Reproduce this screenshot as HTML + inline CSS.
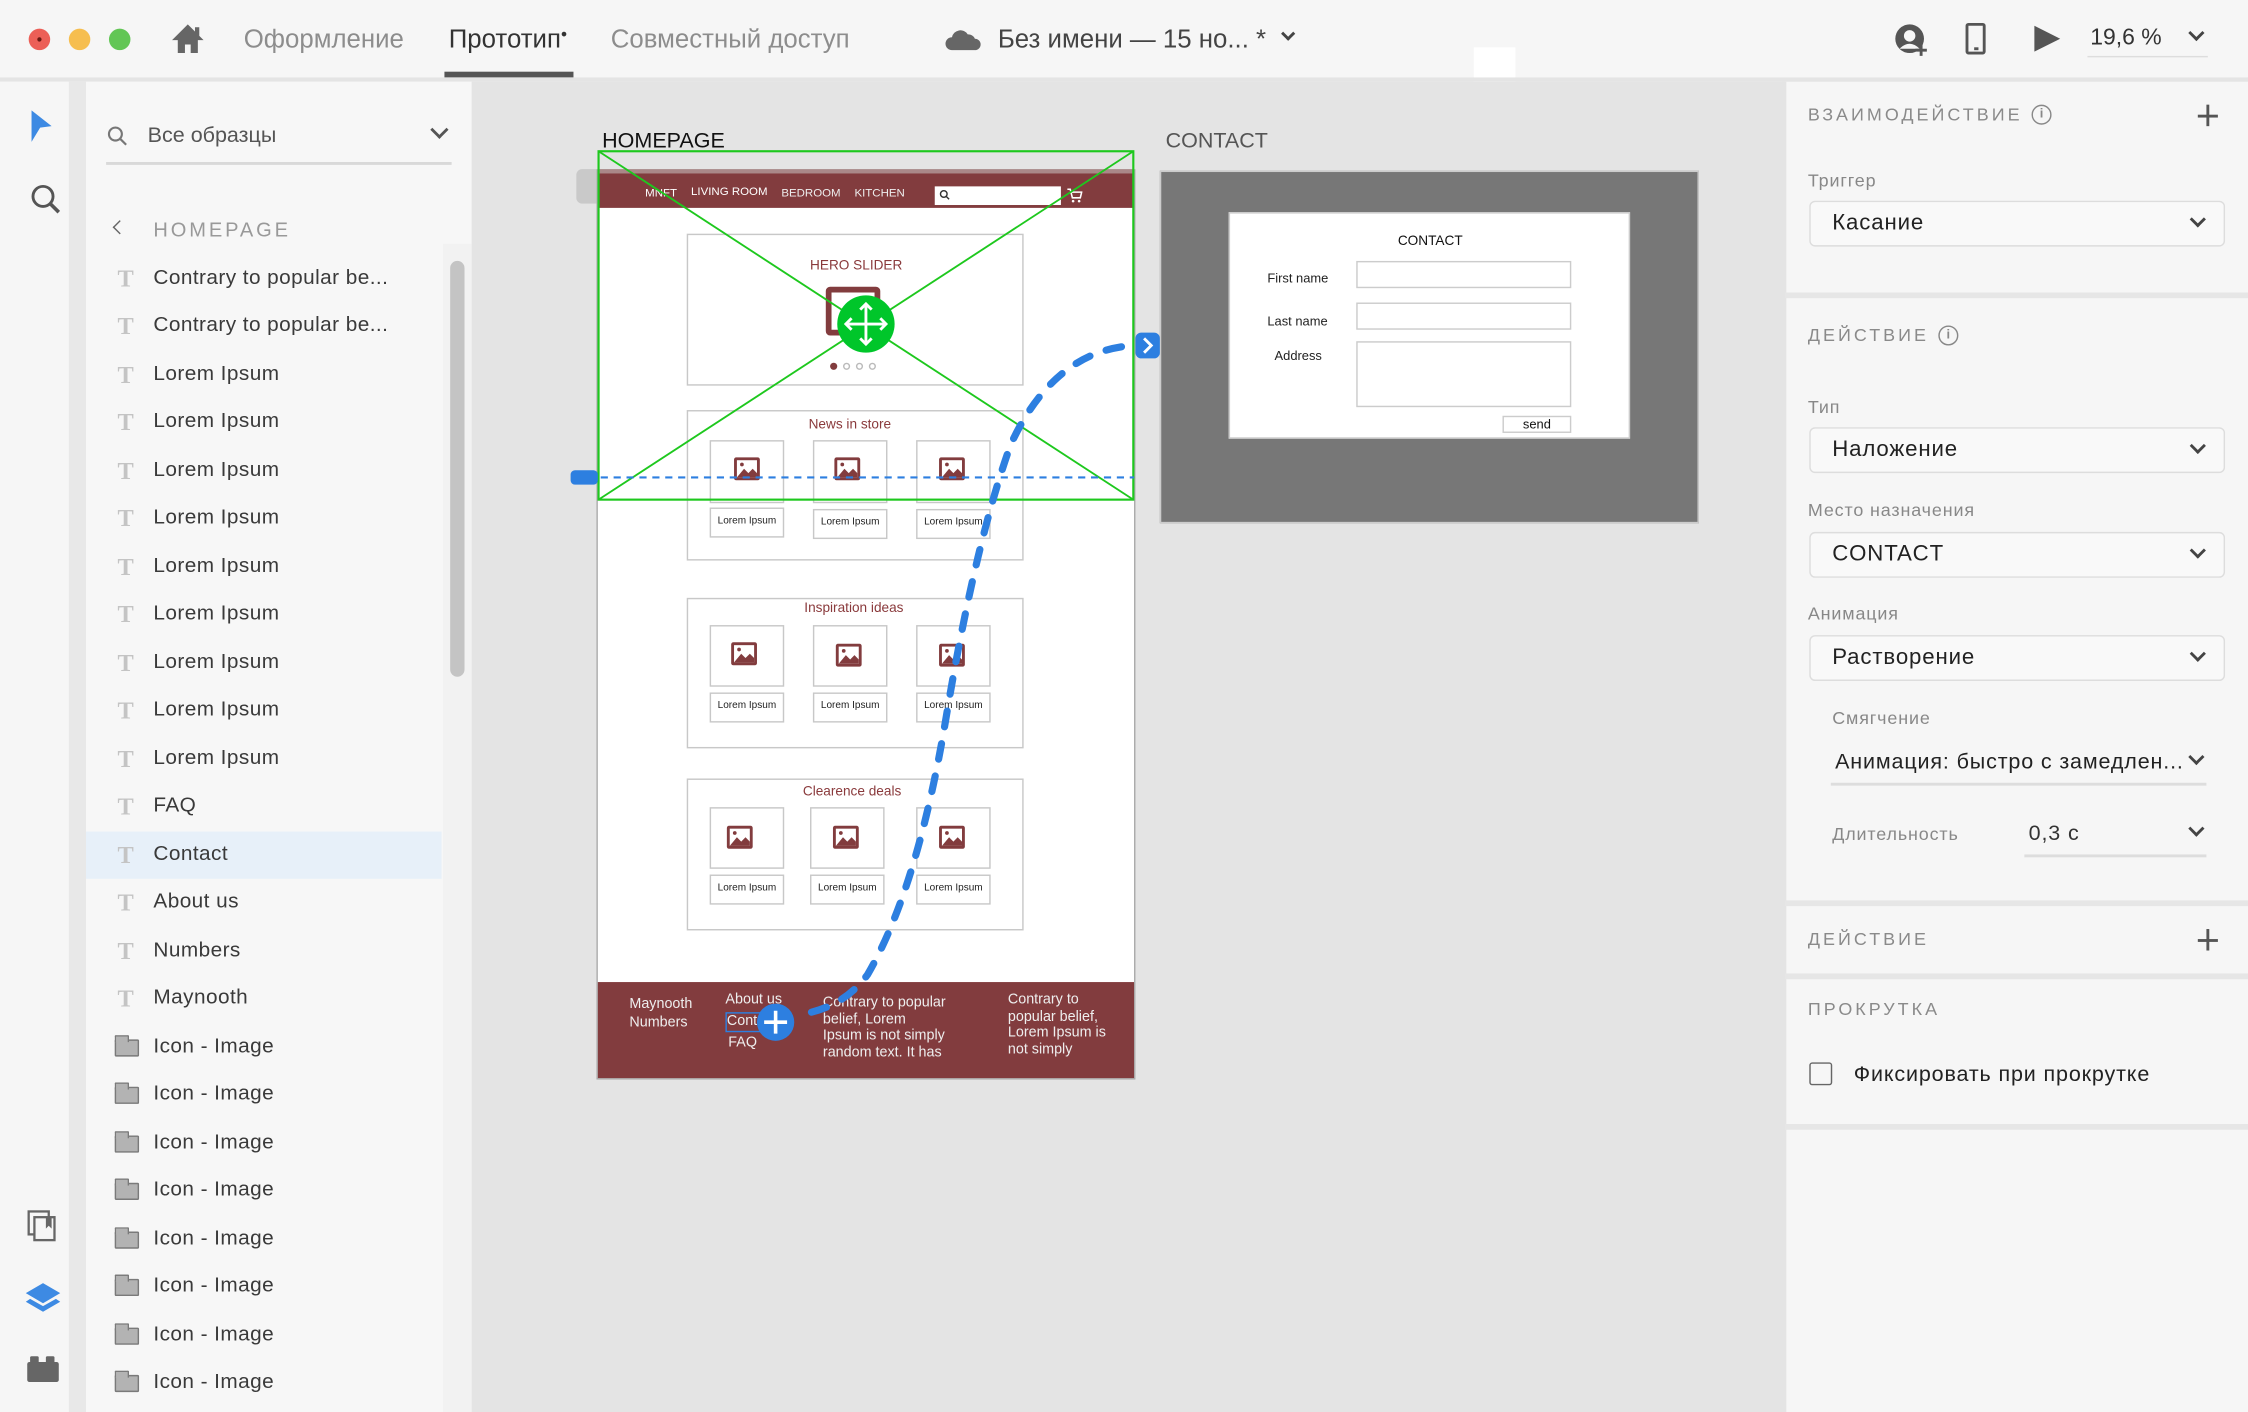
<!DOCTYPE html>
<html><head><meta charset="utf-8"><style>
*{margin:0;padding:0;box-sizing:border-box}
html,body{width:2248px;height:1412px;overflow:hidden;background:#f6f6f6}
#w{position:absolute;left:0;top:0;width:1568px;height:985px;transform:scale(1.43367);transform-origin:0 0;font-family:"Liberation Sans","DejaVu Sans",sans-serif;background:#f6f6f6}
.a{position:absolute}
.t{position:absolute;white-space:nowrap}
.row{position:absolute;left:60px;width:248px;height:33px}
.row .ic{position:absolute;left:22px;top:7px;font-family:"Liberation Serif",serif;font-weight:bold;font-size:17px;color:#c4c4c4}
.row .fd{position:absolute;left:20px;top:11px;width:17px;height:12px;background:#b3b3b3;border:1.5px solid #7a7a7a;border-radius:1px}
.row .fd:before{content:"";position:absolute;left:-1.5px;top:-4px;width:8px;height:4px;background:#b3b3b3;border:1.5px solid #7a7a7a;border-bottom:none;border-radius:1px 1px 0 0}
.row .lb{position:absolute;left:47px;top:8px;font-size:14.5px;color:#3a3a3a;letter-spacing:.3px}
.box{position:absolute;border:1px solid #c8c8c8;background:#fff}
.sec{position:absolute;font-size:9.5px;color:#8a3a3c}
.lbl{position:absolute;border:1px solid #c8c8c8;background:#fff;font-size:7px;color:#222;text-align:center;line-height:18px}
.dd{position:absolute;left:1262px;width:290px;height:32px;border:1px solid #ddd;border-radius:4px;background:#f9f9f9}
.dd span{position:absolute;left:15px;top:6px;font-size:15.5px;color:#222;letter-spacing:.6px}
.chev{position:absolute;width:8px;height:8px;border-right:2px solid #444;border-bottom:2px solid #444;transform:rotate(45deg)}
.cap{position:absolute;font-size:12.5px;color:#888;letter-spacing:.6px}
.hd{position:absolute;font-size:12.5px;color:#8a8a8a;letter-spacing:2.1px}
.sep{position:absolute;left:1245px;width:323px;height:4px;background:#e6e6e6}
</style></head><body><div id="w">

<!-- title bar -->
<div class="a" style="left:0;top:0;width:1568px;height:54px;background:#f6f6f6;border-radius:10px 10px 0 0"></div>
<div class="a" style="left:20px;top:20px;width:15px;height:15px;border-radius:50%;background:#ec5f57"></div>
<div class="a" style="left:26px;top:26px;width:3px;height:3px;border-radius:50%;background:#6a1a14"></div>
<div class="a" style="left:48px;top:20px;width:15px;height:15px;border-radius:50%;background:#f6be4f"></div>
<div class="a" style="left:76px;top:20px;width:15px;height:15px;border-radius:50%;background:#62c655"></div>
<svg class="a" style="left:118px;top:16px" width="26" height="22" viewBox="0 0 26 22"><path d="M13 1 L2 12 H6 V21 H11 V15 H15 V21 H20 V12 H24 Z" fill="#666"/><rect x="18" y="3" width="3" height="6" fill="#666"/></svg>
<div class="t" style="left:170px;top:17px;font-size:18px;color:#8d8d8d">Оформление</div>
<div class="t" style="left:313px;top:17px;font-size:18px;color:#333">Прототип<span style="font-size:12px;vertical-align:top">•</span></div>
<div class="a" style="left:310px;top:50px;width:90px;height:4px;background:#555"></div>
<div class="t" style="left:426px;top:17px;font-size:18px;color:#8d8d8d">Совместный доступ</div>
<svg class="a" style="left:659px;top:19px" width="26" height="17" viewBox="0 0 26 17"><path d="M5 16 A4.5 4.5 0 0 1 5 7 A6 6 0 0 1 16 5 A5 5 0 0 1 21 8 A4 4 0 0 1 21 16 Z" fill="#666"/></svg>
<div class="t" style="left:696px;top:17px;font-size:18px;color:#444">Без имени — 15 но... *</div>
<div class="chev" style="left:895px;top:20px;width:7px;height:7px"></div>
<div class="a" style="left:1028px;top:33px;width:29px;height:30px;background:#fff"></div>
<svg class="a" style="left:1321px;top:16px" width="26" height="24" viewBox="0 0 26 24"><circle cx="11" cy="11" r="10" fill="#555"/><circle cx="11" cy="9" r="4" fill="#f6f6f6"/><path d="M4 18 Q11 11 18 18" fill="#f6f6f6"/><path d="M15 19 H23 M19 15 V23" stroke="#555" stroke-width="2"/></svg>
<div class="a" style="left:1371px;top:16px;width:14px;height:22px;border:2px solid #555;border-radius:2px"></div>
<div class="a" style="left:1377px;top:33px;width:3px;height:2px;background:#555"></div>
<svg class="a" style="left:1418px;top:17px" width="20" height="20" viewBox="0 0 20 20"><path d="M1 1 L19 10 L1 19 Z" fill="#555"/></svg>
<div class="t" style="left:1458px;top:18px;font-size:16px;color:#333">19,6 %</div>
<div class="a" style="left:1456px;top:39px;width:84px;height:1px;background:#ddd"></div>
<div class="chev" style="left:1528px;top:19px;width:8px;height:8px"></div>
<div class="a" style="left:0;top:54px;width:1568px;height:3px;background:#e4e4e4"></div>

<!-- left toolbar -->
<div class="a" style="left:0;top:57px;width:48px;height:928px;background:#f6f6f6"></div>
<div class="a" style="left:48px;top:57px;width:12px;height:928px;background:#e8e8e8"></div>
<svg class="a" style="left:20px;top:76px" width="20" height="24" viewBox="0 0 20 24"><path d="M2 1 L16 12 L8 13 L2 23 Z" fill="#3d8ae3"/></svg>
<svg class="a" style="left:20px;top:127px" width="24" height="24" viewBox="0 0 24 24"><circle cx="10" cy="10" r="7" fill="none" stroke="#555" stroke-width="2"/><path d="M15 15 L21 21" stroke="#555" stroke-width="2.5"/></svg>
<svg class="a" style="left:18px;top:843px" width="24" height="24" viewBox="0 0 24 24"><rect x="2" y="2" width="14" height="16" fill="none" stroke="#666" stroke-width="1.6"/><rect x="6" y="6" width="14" height="16" fill="#f6f6f6" stroke="#666" stroke-width="1.6"/><path d="M14 6 V14 L16 12 L18 14 V6" fill="#666"/></svg>
<svg class="a" style="left:17px;top:893px" width="26" height="24" viewBox="0 0 26 24"><path d="M13 2 L25 9 L13 16 L1 9 Z" fill="#3d8ae3"/><path d="M4 13 L13 18 L22 13 L25 15 L13 22 L1 15 Z" fill="#3d8ae3"/></svg>
<svg class="a" style="left:18px;top:945px" width="24" height="20" viewBox="0 0 24 20"><rect x="1" y="5" width="22" height="14" rx="1.5" fill="#666"/><rect x="3" y="1" width="6" height="6" rx="1" fill="#666"/><rect x="14" y="1" width="6" height="6" rx="1" fill="#666"/></svg>

<!-- layers panel -->
<div class="a" style="left:60px;top:57px;width:269px;height:928px;background:#f7f7f7"></div>
<div class="a" style="left:309px;top:170px;width:20px;height:815px;background:#f2f2f2"></div>
<div class="a" style="left:314px;top:182px;width:10px;height:290px;border-radius:5px;background:#c4c4c4"></div>
<svg class="a" style="left:74px;top:87px" width="16" height="16" viewBox="0 0 16 16"><circle cx="6.5" cy="6.5" r="4.5" fill="none" stroke="#777" stroke-width="1.5"/><path d="M10 10 L14 14" stroke="#777" stroke-width="1.5"/></svg>
<div class="t" style="left:103px;top:86px;font-size:15px;color:#555">Все образцы</div>
<div class="chev" style="left:302px;top:86px;width:9px;height:9px;border-color:#555"></div>
<div class="a" style="left:74px;top:113px;width:241px;height:2px;background:#d9d9d9"></div>
<div class="a" style="left:80px;top:155px;width:7px;height:7px;border-left:1.6px solid #666;border-bottom:1.6px solid #666;transform:rotate(45deg)"></div>
<div class="t" style="left:107px;top:152px;font-size:14px;color:#999;letter-spacing:2px">HOMEPAGE</div>

<div class="a" style="left:60px;top:580px;width:248px;height:33px;background:#e7f0f9"></div>
<div class="row" style="top:178px"><span class="ic">T</span><span class="lb">Contrary to popular be...</span></div>
<div class="row" style="top:211px"><span class="ic">T</span><span class="lb">Contrary to popular be...</span></div>
<div class="row" style="top:245px"><span class="ic">T</span><span class="lb">Lorem Ipsum</span></div>
<div class="row" style="top:278px"><span class="ic">T</span><span class="lb">Lorem Ipsum</span></div>
<div class="row" style="top:312px"><span class="ic">T</span><span class="lb">Lorem Ipsum</span></div>
<div class="row" style="top:345px"><span class="ic">T</span><span class="lb">Lorem Ipsum</span></div>
<div class="row" style="top:379px"><span class="ic">T</span><span class="lb">Lorem Ipsum</span></div>
<div class="row" style="top:412px"><span class="ic">T</span><span class="lb">Lorem Ipsum</span></div>
<div class="row" style="top:446px"><span class="ic">T</span><span class="lb">Lorem Ipsum</span></div>
<div class="row" style="top:479px"><span class="ic">T</span><span class="lb">Lorem Ipsum</span></div>
<div class="row" style="top:513px"><span class="ic">T</span><span class="lb">Lorem Ipsum</span></div>
<div class="row" style="top:546px"><span class="ic">T</span><span class="lb">FAQ</span></div>
<div class="row" style="top:580px"><span class="ic">T</span><span class="lb">Contact</span></div>
<div class="row" style="top:613px"><span class="ic">T</span><span class="lb">About us</span></div>
<div class="row" style="top:647px"><span class="ic">T</span><span class="lb">Numbers</span></div>
<div class="row" style="top:680px"><span class="ic">T</span><span class="lb">Maynooth</span></div>
<div class="row" style="top:714px"><span class="fd"></span><span class="lb">Icon - Image</span></div>
<div class="row" style="top:747px"><span class="fd"></span><span class="lb">Icon - Image</span></div>
<div class="row" style="top:781px"><span class="fd"></span><span class="lb">Icon - Image</span></div>
<div class="row" style="top:814px"><span class="fd"></span><span class="lb">Icon - Image</span></div>
<div class="row" style="top:848px"><span class="fd"></span><span class="lb">Icon - Image</span></div>
<div class="row" style="top:881px"><span class="fd"></span><span class="lb">Icon - Image</span></div>
<div class="row" style="top:915px"><span class="fd"></span><span class="lb">Icon - Image</span></div>
<div class="row" style="top:948px"><span class="fd"></span><span class="lb">Icon - Image</span></div>

<!-- canvas -->
<div class="a" style="left:329px;top:57px;width:916px;height:928px;background:#e4e4e4"></div>
<div class="t" style="left:420px;top:90px;font-size:15px;color:#111">HOMEPAGE</div>
<div class="t" style="left:813px;top:90px;font-size:15px;color:#555">CONTACT</div>
<div class="a" style="left:402px;top:118px;width:18px;height:24px;background:#c9c9c9;border-radius:4px 0 0 4px"></div>

<!-- homepage artboard -->
<div class="a" style="left:416px;top:118px;width:376px;height:635px;background:#fff;border:1.5px solid #aaa"></div>
<div class="a" style="left:417px;top:118px;width:374px;height:4px;background:#a88"></div>
<div class="a" style="left:417px;top:121px;width:374px;height:24px;background:#823c3e"></div>
<div class="t" style="left:450px;top:130px;font-size:8px;color:#fff">MNFT</div>
<div class="t" style="left:482px;top:129px;font-size:8px;color:#fff">LIVING ROOM</div>
<div class="t" style="left:545px;top:130px;font-size:8px;color:#eee">BEDROOM</div>
<div class="t" style="left:596px;top:130px;font-size:8px;color:#eee">KITCHEN</div>
<div class="a" style="left:652px;top:130px;width:88px;height:13px;background:#fff"></div>
<svg class="a" style="left:655px;top:132px" width="8" height="8" viewBox="0 0 8 8"><circle cx="3.3" cy="3.3" r="2.3" fill="none" stroke="#333" stroke-width="1"/><path d="M5 5 L7 7" stroke="#333"/></svg>
<svg class="a" style="left:744px;top:131px" width="11" height="11" viewBox="0 0 11 11"><path d="M0.5 1 H2.5 L4 7 H9.5 L10.5 3 H3" fill="none" stroke="#fff" stroke-width="1.1"/><circle cx="4.5" cy="9.3" r="0.9" fill="#fff"/><circle cx="8.7" cy="9.3" r="0.9" fill="#fff"/></svg>

<div class="box" style="left:479px;top:163px;width:235px;height:106px"></div>
<div class="sec" style="left:565px;top:180px">HERO SLIDER</div>
<div class="a" style="left:576px;top:200px;width:38px;height:34px;border:4px solid #823c3e;border-radius:3px"></div>
<div class="a" style="left:579px;top:253px;width:5px;height:5px;border-radius:50%;background:#823c3e"></div>
<div class="a" style="left:588px;top:253px;width:5px;height:5px;border-radius:50%;border:1px solid #bbb"></div>
<div class="a" style="left:597px;top:253px;width:5px;height:5px;border-radius:50%;border:1px solid #bbb"></div>
<div class="a" style="left:606px;top:253px;width:5px;height:5px;border-radius:50%;border:1px solid #bbb"></div>

<div class="box" style="left:479px;top:286px;width:235px;height:105px"></div>
<div class="sec" style="left:564px;top:291px">News in store</div>
<div class="box" style="left:495px;top:307px;width:52px;height:44px"></div>
<div class="box" style="left:567px;top:307px;width:52px;height:44px"></div>
<div class="box" style="left:639px;top:307px;width:52px;height:44px"></div>
<div class="lbl" style="left:495px;top:354px;width:52px;height:21px">Lorem Ipsum</div>
<div class="lbl" style="left:567px;top:355px;width:52px;height:21px">Lorem Ipsum</div>
<div class="lbl" style="left:639px;top:355px;width:52px;height:21px">Lorem Ipsum</div>

<div class="box" style="left:479px;top:417px;width:235px;height:105px"></div>
<div class="sec" style="left:561px;top:419px">Inspiration ideas</div>
<div class="box" style="left:495px;top:436px;width:52px;height:43px"></div>
<div class="box" style="left:567px;top:436px;width:52px;height:43px"></div>
<div class="box" style="left:639px;top:436px;width:52px;height:43px"></div>
<div class="lbl" style="left:495px;top:483px;width:52px;height:21px">Lorem Ipsum</div>
<div class="lbl" style="left:567px;top:483px;width:52px;height:21px">Lorem Ipsum</div>
<div class="lbl" style="left:639px;top:483px;width:52px;height:21px">Lorem Ipsum</div>

<div class="box" style="left:479px;top:543px;width:235px;height:106px"></div>
<div class="sec" style="left:560px;top:547px">Clearence deals</div>
<div class="box" style="left:495px;top:563px;width:52px;height:43px"></div>
<div class="box" style="left:565px;top:563px;width:52px;height:43px"></div>
<div class="box" style="left:639px;top:563px;width:52px;height:43px"></div>
<div class="lbl" style="left:495px;top:610px;width:52px;height:21px">Lorem Ipsum</div>
<div class="lbl" style="left:565px;top:610px;width:52px;height:21px">Lorem Ipsum</div>
<div class="lbl" style="left:639px;top:610px;width:52px;height:21px">Lorem Ipsum</div>

<svg class="a" style="left:0;top:0;overflow:visible" width="1" height="1">
<defs><g id="im"><rect x="0" y="0" width="18" height="16" rx="1.5" fill="#823c3e"/><rect x="2" y="2" width="14" height="12" fill="#fff"/><path d="M2 14 L7 8 L10 11 L13 8 L16 11 V14 Z" fill="#823c3e"/><circle cx="5.5" cy="5" r="1.3" fill="#823c3e"/></g></defs>
<use href="#im" x="512" y="319"/><use href="#im" x="582" y="319"/><use href="#im" x="655" y="319"/>
<use href="#im" x="510" y="448"/><use href="#im" x="583" y="449"/><use href="#im" x="655" y="449"/>
<use href="#im" x="507" y="576"/><use href="#im" x="581" y="576"/><use href="#im" x="655" y="576"/>
</svg>

<div class="a" style="left:417px;top:685px;width:374px;height:67px;background:#823c3e"></div>
<div class="t" style="left:439px;top:694px;font-size:10px;color:#eee;line-height:13px">Maynooth<br>Numbers</div>
<div class="t" style="left:506px;top:692px;font-size:10px;color:#eee">About us</div>
<div class="a" style="left:506px;top:706px;width:30px;height:14px;border:1px solid #2d7fe0"></div>
<div class="t" style="left:507px;top:707px;font-size:10px;color:#eee">Cont</div>
<div class="t" style="left:508px;top:722px;font-size:10px;color:#eee">FAQ</div>
<div class="t" style="left:574px;top:694px;font-size:10px;color:#eee;line-height:11.5px">Contrary to popular<br>belief, Lorem<br>Ipsum is not simply<br>random text. It has</div>
<div class="t" style="left:703px;top:692px;font-size:10px;color:#eee;line-height:11.5px">Contrary to<br>popular belief,<br>Lorem Ipsum is<br>not simply</div>

<!-- contact artboard -->
<div class="a" style="left:809px;top:119px;width:376px;height:246px;background:#777;border:1px solid #ccc"></div>
<div class="a" style="left:857px;top:148px;width:280px;height:158px;background:#fff;border:1px solid #ccc"></div>
<div class="t" style="left:975px;top:163px;font-size:9.5px;color:#111">CONTACT</div>
<div class="t" style="left:884px;top:189px;font-size:9px;color:#222">First name</div>
<div class="t" style="left:884px;top:219px;font-size:9px;color:#222">Last name</div>
<div class="t" style="left:889px;top:243px;font-size:9px;color:#222">Address</div>
<div class="a" style="left:946px;top:182px;width:150px;height:19px;border:1px solid #ccc"></div>
<div class="a" style="left:946px;top:211px;width:150px;height:19px;border:1px solid #ccc"></div>
<div class="a" style="left:946px;top:238px;width:150px;height:46px;border:1px solid #ccc"></div>
<div class="a" style="left:1048px;top:290px;width:48px;height:12px;border:1px solid #ccc;font-size:9px;text-align:center;line-height:10px;color:#111">send</div>

<!-- overlays -->
<svg class="a" style="left:0;top:0" width="1245" height="985">
<rect x="417.5" y="105.5" width="373" height="243" fill="none" stroke="#1ec81e" stroke-width="1.5"/>
<path d="M417.5 105.5 L790.5 348.5 M790.5 105.5 L417.5 348.5" stroke="#1ec81e" stroke-width="1.3"/>
<circle cx="604" cy="226" r="20" fill="#00c62a"/>
<path d="M604 212 V240 M590 226 H618" stroke="#fff" stroke-width="2"/>
<path d="M600 216 L604 212 L608 216 M600 236 L604 240 L608 236 M594 222 L590 226 L594 230 M614 222 L618 226 L614 230" fill="none" stroke="#fff" stroke-width="2"/>
<path d="M410 333 H791" stroke="#2d7fe0" stroke-width="1.5" stroke-dasharray="5 4"/>
<rect x="398" y="328" width="19" height="10" rx="3" fill="#2d7fe0"/>
<path d="M566 706 Q590 700 605 680 Q640 620 660 500 Q680 380 705 310 Q735 245 790 241" fill="none" stroke="#2d7fe0" stroke-width="5" stroke-linecap="round" stroke-dasharray="11 12"/>
<circle cx="541" cy="713" r="13" fill="#2d7fe0"/>
<path d="M541 705 V721 M533 713 H549" stroke="#fff" stroke-width="2.5"/>
<rect x="792" y="232" width="17" height="18" rx="4" fill="#2d7fe0"/>
<path d="M798 236 L803 241 L798 246" fill="none" stroke="#fff" stroke-width="2"/>
</svg>

<!-- right panel -->
<div class="a" style="left:1243px;top:57px;width:3px;height:928px;background:#e4e4e4"></div>
<div class="hd" style="left:1261px;top:73px">ВЗАИМОДЕЙСТВИЕ</div>
<div class="a" style="left:1417px;top:73px;width:14px;height:14px;border:1.5px solid #888;border-radius:50%;font-size:9px;color:#888;text-align:center;line-height:11px;font-weight:bold">i</div>
<div class="a" style="left:1533px;top:80px;width:14px;height:1.6px;background:#555"></div>
<div class="a" style="left:1539px;top:73px;width:1.6px;height:15px;background:#555"></div>
<div class="cap" style="left:1261px;top:119px">Триггер</div>
<div class="dd" style="top:140px"><span>Касание</span><div class="chev" style="left:266px;top:8px"></div></div>
<div class="sep" style="top:204px"></div>
<div class="hd" style="left:1261px;top:227px">ДЕЙСТВИЕ</div>
<div class="a" style="left:1352px;top:227px;width:14px;height:14px;border:1.5px solid #888;border-radius:50%;font-size:9px;color:#888;text-align:center;line-height:11px;font-weight:bold">i</div>
<div class="cap" style="left:1261px;top:277px">Тип</div>
<div class="dd" style="top:298px"><span>Наложение</span><div class="chev" style="left:266px;top:8px"></div></div>
<div class="cap" style="left:1261px;top:349px">Место назначения</div>
<div class="dd" style="top:371px"><span>CONTACT</span><div class="chev" style="left:266px;top:8px"></div></div>
<div class="cap" style="left:1261px;top:421px">Анимация</div>
<div class="dd" style="top:443px"><span>Растворение</span><div class="chev" style="left:266px;top:8px"></div></div>
<div class="cap" style="left:1278px;top:494px">Смягчение</div>
<div class="t" style="left:1280px;top:523px;font-size:15px;color:#222;letter-spacing:.6px">Анимация: быстро с замедлен...</div>
<div class="chev" style="left:1528px;top:524px"></div>
<div class="a" style="left:1277px;top:546px;width:262px;height:1.5px;background:#ddd"></div>
<div class="cap" style="left:1278px;top:575px">Длительность</div>
<div class="t" style="left:1415px;top:573px;font-size:15px;color:#333;letter-spacing:.6px">0,3 с</div>
<div class="chev" style="left:1528px;top:574px"></div>
<div class="a" style="left:1412px;top:596px;width:127px;height:1.5px;background:#ddd"></div>
<div class="sep" style="top:628px"></div>
<div class="hd" style="left:1261px;top:648px">ДЕЙСТВИЕ</div>
<div class="a" style="left:1533px;top:655px;width:14px;height:1.6px;background:#555"></div>
<div class="a" style="left:1539px;top:648px;width:1.6px;height:15px;background:#555"></div>
<div class="sep" style="top:679px"></div>
<div class="hd" style="left:1261px;top:697px">ПРОКРУТКА</div>
<div class="a" style="left:1262px;top:741px;width:16px;height:16px;border:1.5px solid #666;border-radius:2px"></div>
<div class="t" style="left:1293px;top:741px;font-size:15px;color:#222;letter-spacing:.6px">Фиксировать при прокрутке</div>
<div class="sep" style="top:784px"></div>

</div></body></html>
